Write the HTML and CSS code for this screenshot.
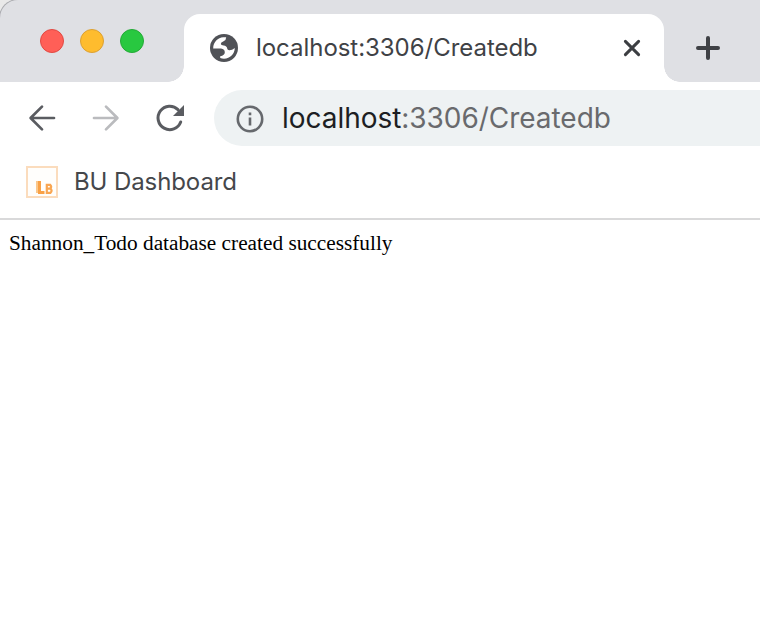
FILE: index.html
```html
<!DOCTYPE html>
<html lang="en">
<head>
<meta charset="utf-8">
<title>localhost:3306/Createdb</title>
<link rel="stylesheet" href="styles.css">
</head>
<body>
<header class="tabstrip">
  <div class="lights"><i class="light red"></i><i class="light yellow"></i><i class="light green"></i></div>
  <div class="tab">
    <svg class="globe" viewBox="0 0 28 28"><circle cx="14" cy="14" r="14" fill="#505257"/><path fill="#fff" d="M3.2 14.4C3.2 8.2 8 3.5 13.2 3.3H16.2Q16.2 6.2 13.6 7.2Q10.6 8.2 10.8 10Q11 11.4 13.6 11.6Q16.8 12 17.2 14.6Q17.4 16.2 19.2 16.3Q22 16.4 24.8 14C24.6 20 20.2 24.6 14 24.7Q12 24.7 10.2 24V22.2Q14.8 21.4 14.8 18.2Q14.8 14.9 11 14.4Z"/></svg>
    <span class="tab-title">localhost:3306/Createdb</span>
    <svg class="close" viewBox="0 0 16 16"><path d="M1.4 1.4 14.6 14.6M14.6 1.4 1.4 14.6"/></svg>
  </div>
  <svg class="plus" viewBox="0 0 24 24"><path d="M12 2V22M2 12H22"/></svg>
</header>
<nav class="toolbar">
  <svg class="nav-icon back" viewBox="0 0 28 28"><path d="M26 14H3M14 2.6 2.6 14 14 25.4"/></svg>
  <svg class="nav-icon forward" viewBox="0 0 28 28"><path d="M2 14H25M14 2.6 25.4 14 14 25.4"/></svg>
  <svg class="nav-icon reload" viewBox="0 0 28 28"><path d="M24.7 18A11.7 11.7 0 1 1 22 5.6"/><path class="tip" d="M28 1V12H17Z"/></svg>
  <div class="omnibox">
    <svg class="info" viewBox="0 0 28 28"><circle cx="14" cy="14" r="12.2"/><path d="M14 12.6V20.4M14 7.4V10.2"/></svg>
    <span class="url"><b>localhost</b>:3306/Createdb</span>
  </div>
</nav>
<div class="bookmarks">
  <svg class="bookmark-icon" viewBox="0 0 32 32"><rect x="1" y="1" width="30" height="30" fill="#fffefc" stroke="#fbdcbd" stroke-width="2"/><path d="M11 15V27" stroke="#fbc88c" stroke-width="2"/><path d="M13.5 15V26.5H18.5" stroke="#f9a146" stroke-width="3" fill="none"/><path d="M20.8 18.9H24.3Q26 20.7 24.3 22.6Q26.8 24.6 24.5 26.8H20.8ZM21 22.6H24" stroke="#f9a652" stroke-width="2.2" fill="none"/></svg>
  <span class="bookmark-label">BU Dashboard</span>
</div>
<main class="page">Shannon_Todo database created successfully</main>
</body>
</html>
```
FILE: styles.css
```css
* { box-sizing: border-box; }
body { margin: 0; height: 618px; overflow: hidden; background: #fff; font-family: Inter, "Liberation Sans", sans-serif; }
svg { display: block; flex: none; fill: none; overflow: visible; }
.tabstrip { display: flex; height: 82px; background: #dfe0e4; border-top-left-radius: 18px; box-shadow: 0 0 0 1px #a9aaae, -12px -12px 0 12px #e9e9e9; }
.lights { display: flex; gap: 16px; width: 184px; padding: 29px 0 0 40px; }
.light { width: 24px; height: 24px; border-radius: 50%; border: 1px solid; }
.red { background: #ff5f57; border-color: #e14942; }
.yellow { background: #febc2e; border-color: #dca032; }
.green { background: #28c840; border-color: #24a936; }
.tab { position: relative; display: flex; align-items: center; width: 480px; height: 68px; margin-top: 14px; padding: 0 24px 0 26px; background: #fff; border-radius: 16px 16px 0 0; }
.tab::before, .tab::after { content: ""; position: absolute; bottom: 0; width: 16px; height: 16px; }
.tab::before { left: -16px; background: radial-gradient(circle at 0 0, transparent 15.5px, #fff 16px); }
.tab::after { right: -16px; background: radial-gradient(circle at 100% 0, transparent 15.5px, #fff 16px); }
.globe { width: 28px; height: 28px; }
.tab-title { margin-left: 18px; color: #3f4246; font-size: 24px; line-height: 30px; letter-spacing: -0.04px; white-space: nowrap; }
.close { width: 16px; height: 16px; margin-left: auto; stroke: #3c3e42; stroke-width: 3; stroke-linecap: round; }
.plus { width: 24px; height: 24px; margin: 36px 0 0 32px; stroke: #3f4145; stroke-width: 4; stroke-linecap: round; }
.toolbar { display: flex; align-items: center; height: 64px; padding: 8px 0 0 28px; }
.toolbar, .bookmarks { background: #fff; }
.nav-icon { width: 28px; height: 28px; margin: -1px 36px 0 0; stroke: #5a5c61; stroke-width: 2.7; stroke-linecap: round; stroke-linejoin: round; }
.forward { stroke: #babbbe; }
.reload { margin-right: 30px; stroke-width: 3; }
.tip { fill: #5a5c61; stroke: none; }
.omnibox { display: flex; flex: 1; align-items: center; height: 56px; padding-left: 22px; background: #eef2f3; border-radius: 28px 0 0 28px; }
.info { width: 28px; height: 28px; margin-top: 1px; stroke: #66696d; stroke-width: 2.6; }
.url { margin-left: 18px; color: #696a6d; font-size: 28px; line-height: 36px; letter-spacing: -0.04px; white-space: nowrap; }
.url b { color: #1d1f23; font-weight: 400; }
.bookmarks { display: flex; align-items: center; height: 74px; padding: 0 26px; border-bottom: 2px solid #d9d9da; }
.bookmark-icon { width: 32px; height: 32px; }
.bookmark-label { margin-left: 16px; color: #45474b; font-size: 24px; line-height: 30px; letter-spacing: -0.1px; white-space: nowrap; }
.page { padding: 11px 9px 0; color: #000; font: 21.3px/24px "Liberation Serif", serif; white-space: nowrap; }
```
